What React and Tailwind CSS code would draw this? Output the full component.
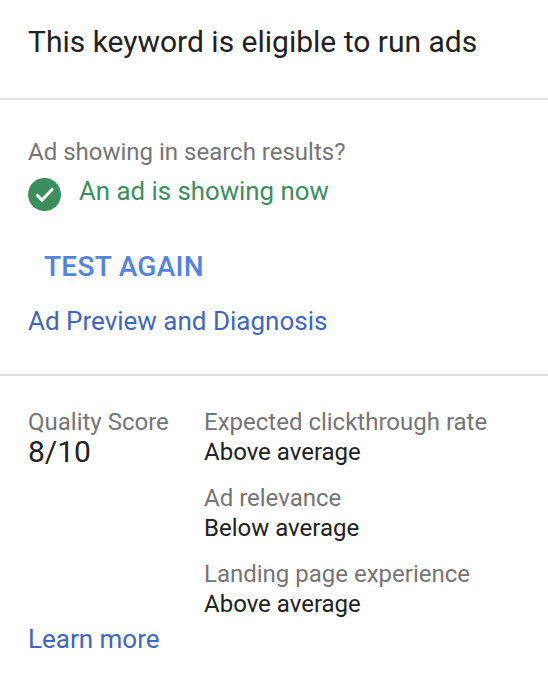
function Check() {
  return (
    <svg width="33" height="33" viewBox="0 0 33 33" className="mt-[2px] shrink-0">
      <circle cx="16.5" cy="16.5" r="16.5" fill="#3b8f5c" />
      <path d="M8.5 16.5 L14 22 L25 10.5" fill="none" stroke="#fff" strokeWidth="3" />
    </svg>
  )
}

function Factor({ label, value }) {
  return (
    <div className="mb-[16px]">
      <p className="text-[24px] leading-[30px] text-[#757575]">{label}</p>
      <p className="text-[24px] leading-[30px] text-[#212121]">{value}</p>
    </div>
  )
}

export default function App() {
  return (
    <div className="h-[674px] w-[548px] overflow-hidden bg-white font-['Roboto',sans-serif]">
      <div className="h-[100px] border-b-2 border-[#e0e0e0] pl-[28px] pt-[24px]">
        <h1 className="text-[30px] leading-[36px] text-[#212121]">This keyword is eligible to run ads</h1>
      </div>

      <div className="h-[276px] border-b-2 border-[#e0e0e0] pl-[28px] pt-[37px]">
        <p className="text-[24px] leading-[30px] text-[#757575]">Ad showing in search results?</p>
        <div className="mt-[9px] flex h-[30px] items-start gap-[18px]">
          <Check />
          <span className="text-[25.8px] leading-[30px] text-[#3b8f5c]">An ad is showing now</span>
        </div>
        <button className="mt-[43px] block pl-[16px] text-[28px] font-medium leading-[36px] tracking-[0.3px] text-[#5283e4]">TEST AGAIN</button>
        <a className="mt-[20px] block text-[26px] leading-[32px] text-[#3f66c4]">Ad Preview and Diagnosis</a>
      </div>

      <div className="flex pl-[28px] pt-[31px]">
        <div className="w-[176px]">
          <p className="text-[24px] leading-[30px] text-[#757575]">Quality Score</p>
          <p className="text-[30px] leading-[30px] text-[#212121]">8/10</p>
        </div>
        <div>
          <Factor label="Expected clickthrough rate" value="Above average" />
          <Factor label="Ad relevance" value="Below average" />
          <Factor label="Landing page experience" value="Above average" />
        </div>
      </div>
      <a className="-mt-[12px] block pl-[28px] text-[26px] leading-[32px] text-[#3f66c4]">Learn more</a>
    </div>
  )
}
